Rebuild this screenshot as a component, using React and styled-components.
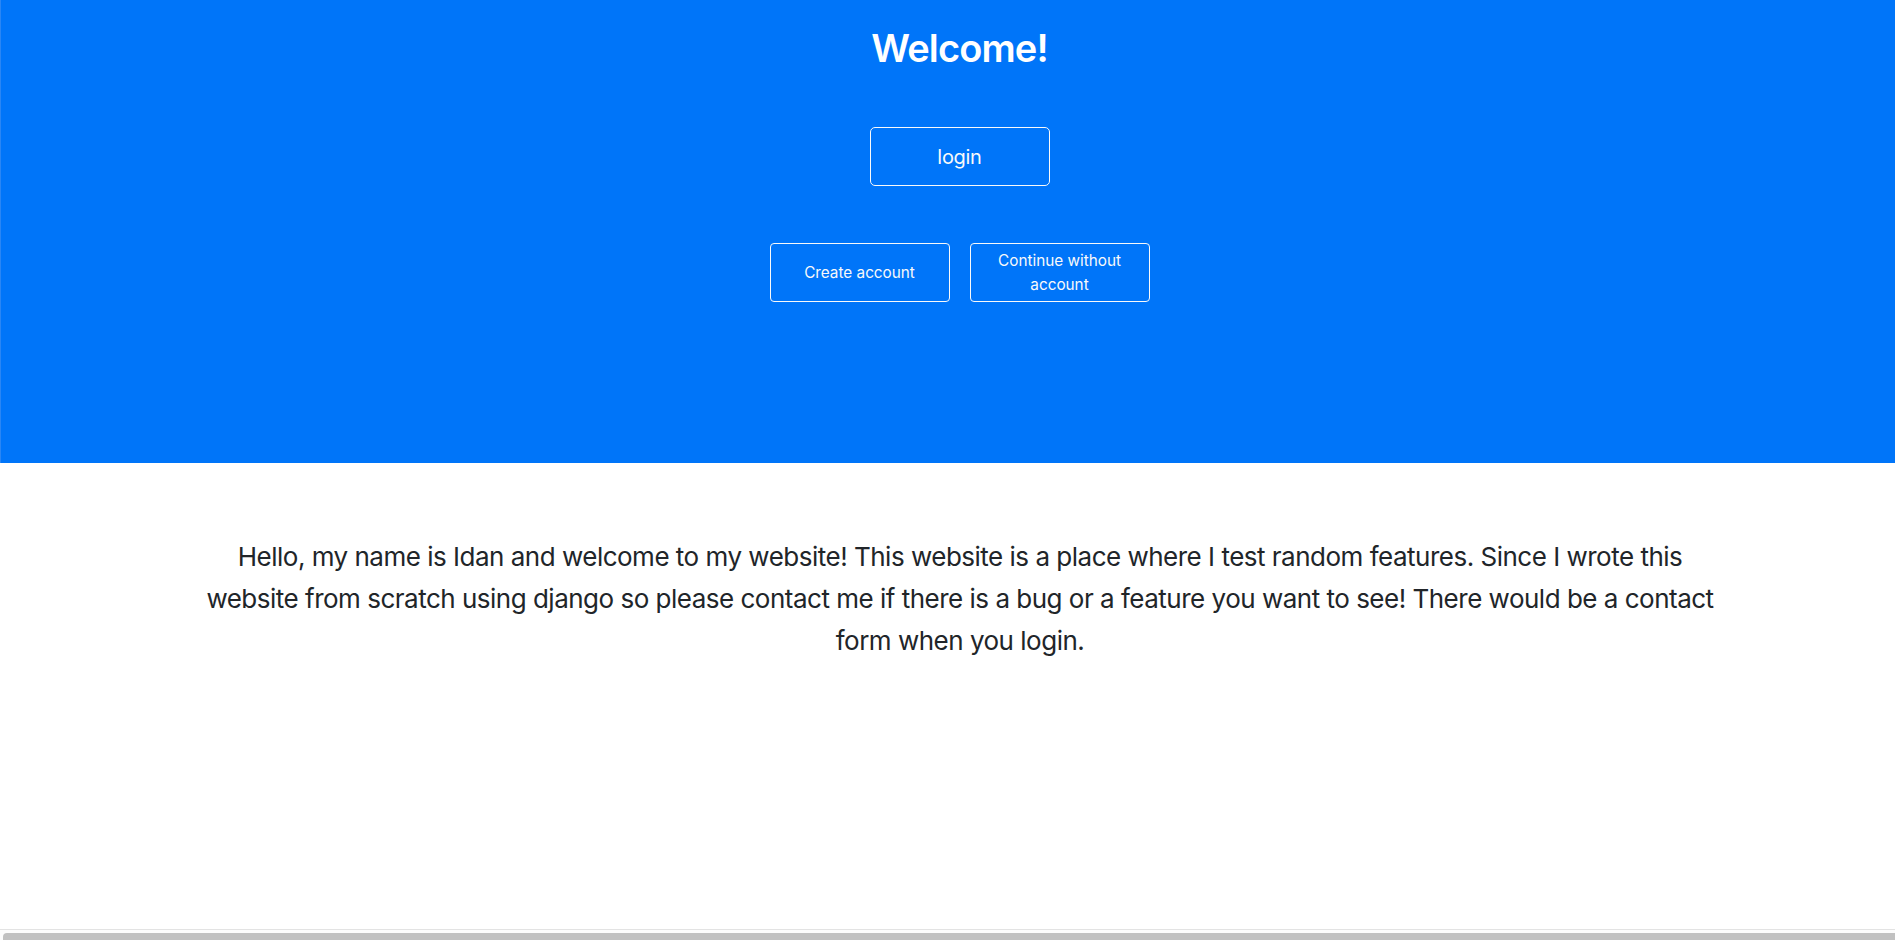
import React from "react";
import styled, { createGlobalStyle } from "styled-components";

const Global = createGlobalStyle`
  html, body {
    margin: 0;
    padding: 0;
    overflow: hidden;
    background: #ffffff;
  }
  body {
    font-family: Inter, "Noto Sans", "Liberation Sans", sans-serif;
    color: #212529;
  }
`;

const Page = styled.div`
  width: 1920px;
  min-height: 940px;
  display: flex;
  flex-direction: column;
`;

const Hero = styled.section`
  height: 463px;
  box-sizing: border-box;
  background: #0075f9;
  border-left: 1px solid #2a86f5;
  padding-top: 25px;
  padding-right: 2px;
  display: flex;
  flex-direction: column;
  align-items: center;
`;

const Title = styled.h1`
  margin: 0;
  font-size: 38px;
  line-height: 46px;
  font-weight: 600;
  color: #ffffff;
  letter-spacing: -0.85px;
`;

const Button = styled.button`
  width: 180px;
  height: 59px;
  box-sizing: border-box;
  background: transparent;
  border: 1px solid #f8f9fa;
  border-radius: ${(p) => (p.$large ? "5px" : "4px")};
  color: #f8f9fa;
  font-family: inherit;
  font-size: ${(p) => (p.$large ? "20px" : "15.3px")};
  line-height: ${(p) => (p.$large ? "30px" : "24px")};
  letter-spacing: ${(p) => (p.$large ? "-0.3px" : "0")};
  font-weight: 400;
  padding: 1px 12px 0;
  cursor: pointer;
`;

const LoginRow = styled.div`
  margin-top: 56px;
  display: flex;
  justify-content: center;
`;

const ActionRow = styled.div`
  margin-top: 57px;
  display: flex;
  justify-content: center;
  gap: 20px;
`;

const Intro = styled.p`
  margin: 73px auto 0;
  max-width: 1530px;
  text-align: center;
  font-size: 26px;
  line-height: 42px;
  font-weight: 400;
  color: #212529;
  letter-spacing: -0.5px;
`;

const ScrollTrack = styled.div`
  position: fixed;
  left: 0;
  right: 0;
  bottom: 0;
  height: 11px;
  box-sizing: border-box;
  border-top: 1px solid #e3e3e3;
  background: #fcfcfc;
  padding: 3px 0 0 3px;
`;

const ScrollThumb = styled.div`
  height: 8px;
  width: 100%;
  background: #c1c1c1;
  border-radius: 4px 0 0 0;
`;

export default function App() {
  return (
    <>
      <Global />
      <Page>
        <Hero>
          <Title>Welcome!</Title>
          <LoginRow>
            <Button $large>login</Button>
          </LoginRow>
          <ActionRow>
            <Button>Create account</Button>
            <Button>Continue without account</Button>
          </ActionRow>
        </Hero>
        <Intro>
          Hello, my name is Idan and welcome to my website! This website is a
          place where I test random features. Since I wrote this website from
          scratch using django so please contact me if there is a bug or a
          feature you want to see! There would be a contact form when you
          login.
        </Intro>
      </Page>
      <ScrollTrack>
        <ScrollThumb />
      </ScrollTrack>
    </>
  );
}
